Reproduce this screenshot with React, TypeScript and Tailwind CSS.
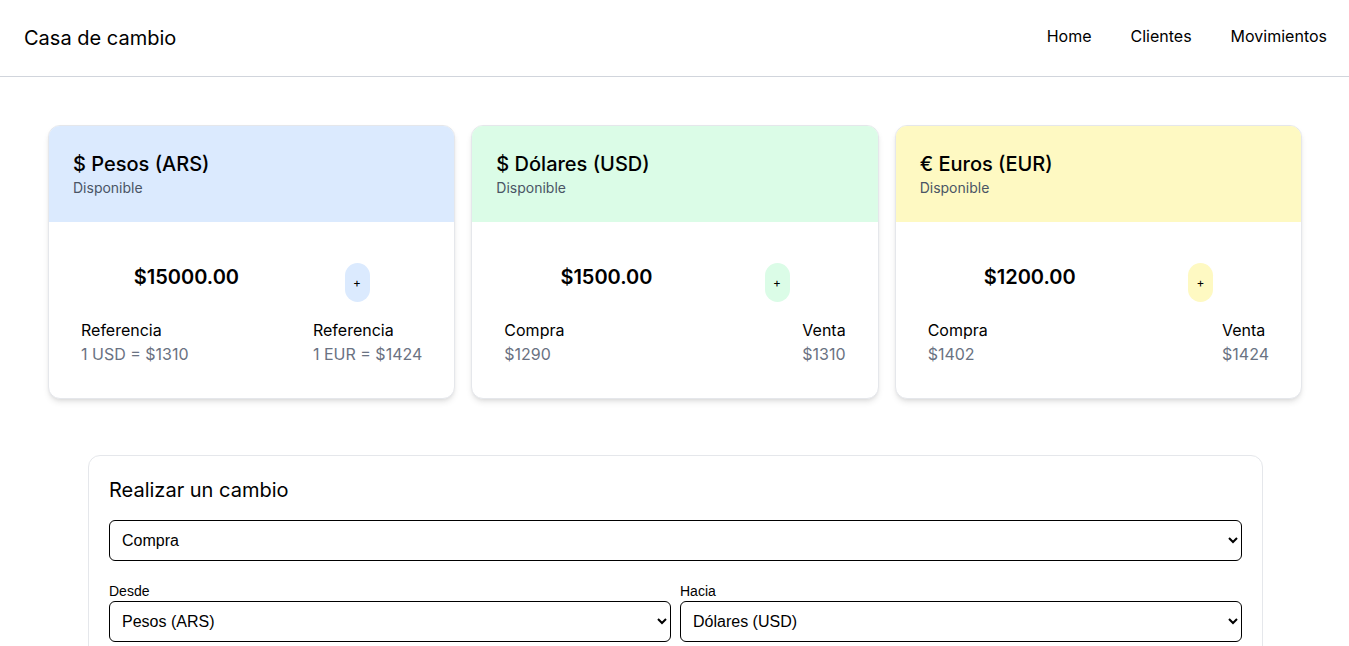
import { useState } from "react";

type Currency = {
  symbol: string;
  name: string;
  amount: string;
  header: string;
  button: string;
  left: { label: string; value: string };
  right: { label: string; value: string };
};

const currencies: Currency[] = [
  {
    symbol: "$",
    name: "Pesos (ARS)",
    amount: "$15000.00",
    header: "bg-blue-100",
    button: "bg-blue-100",
    left: { label: "Referencia", value: "1 USD = $1310" },
    right: { label: "Referencia", value: "1 EUR = $1424" },
  },
  {
    symbol: "$",
    name: "Dólares (USD)",
    amount: "$1500.00",
    header: "bg-green-100",
    button: "bg-green-100",
    left: { label: "Compra", value: "$1290" },
    right: { label: "Venta", value: "$1310" },
  },
  {
    symbol: "€",
    name: "Euros (EUR)",
    amount: "$1200.00",
    header: "bg-yellow-100",
    button: "bg-yellow-100",
    left: { label: "Compra", value: "$1402" },
    right: { label: "Venta", value: "$1424" },
  },
];

const CurrencyCard = ({ c }: { c: Currency }) => {
  return (
    <div className="rounded-xl border border-gray-200 shadow-md overflow-hidden bg-white">
      <div className={`${c.header} p-6`}>
        <h2 className="text-xl font-medium text-black">
          {c.symbol} {c.name}
        </h2>
        <p className="text-sm text-gray-600">Disponible</p>
      </div>
      <div className="px-8 pt-[41px] pb-8">
        <div className="flex justify-around items-start">
          <p className="text-xl font-semibold text-black leading-7">{c.amount}</p>
          <button className={`${c.button} rounded-full w-[25px] h-[39px] text-xs text-black flex items-center justify-center`}>
            +
          </button>
        </div>
        <div className="flex justify-between mt-4">
          <div>
            <p className="text-black">{c.left.label}</p>
            <p className="text-gray-500">{c.left.value}</p>
          </div>
          <div>
            <p className="text-black">{c.right.label}</p>
            <p className="text-gray-500">{c.right.value}</p>
          </div>
        </div>
      </div>
    </div>
  );
};

export default function App() {
  const [tipo, setTipo] = useState("compra");
  const [desde, setDesde] = useState("ARS");
  const [hacia, setHacia] = useState("USD");

  return (
    <div className="min-h-screen bg-white font-['Inter',sans-serif] text-black">
      <header className="h-[77px] border-b border-gray-300 flex items-center justify-between pl-6 pr-[22px]">
        <span className="text-xl">Casa de cambio</span>
        <nav className="flex gap-[39px] -mt-1">
          <a href="#">Home</a>
          <a href="#">Clientes</a>
          <a href="#">Movimientos</a>
        </nav>
      </header>

      <section className="pl-12 pr-[47px] pt-12 grid grid-cols-3 gap-4">
        {currencies.map((c) => (
          <CurrencyCard key={c.name} c={c} />
        ))}
      </section>

      <section className="pl-[88px] pr-[86px] mt-14">
        <div className="rounded-xl border border-gray-200 px-5 pt-5 pb-6">
          <h3 className="text-xl mb-4">Realizar un cambio</h3>
          <select
            value={tipo}
            onChange={(e) => setTipo(e.target.value)}
            className="w-full h-[41px] border border-black rounded-md px-2 font-['Liberation_Sans',sans-serif]"
          >
            <option value="compra">Compra</option>
            <option value="venta">Venta</option>
          </select>
          <div className="grid grid-cols-2 gap-[9px] mt-5 font-['Liberation_Sans',sans-serif]">
            <div>
              <label className="text-sm block leading-5">Desde</label>
              <select
                value={desde}
                onChange={(e) => setDesde(e.target.value)}
                className="w-full h-[41px] border border-black rounded-md px-2"
              >
                <option value="ARS">Pesos (ARS)</option>
                <option value="USD">Dólares (USD)</option>
                <option value="EUR">Euros (EUR)</option>
              </select>
            </div>
            <div>
              <label className="text-sm block leading-5">Hacia</label>
              <select
                value={hacia}
                onChange={(e) => setHacia(e.target.value)}
                className="w-full h-[41px] border border-black rounded-md px-2"
              >
                <option value="ARS">Pesos (ARS)</option>
                <option value="USD">Dólares (USD)</option>
                <option value="EUR">Euros (EUR)</option>
              </select>
            </div>
          </div>
        </div>
      </section>
    </div>
  );
}
